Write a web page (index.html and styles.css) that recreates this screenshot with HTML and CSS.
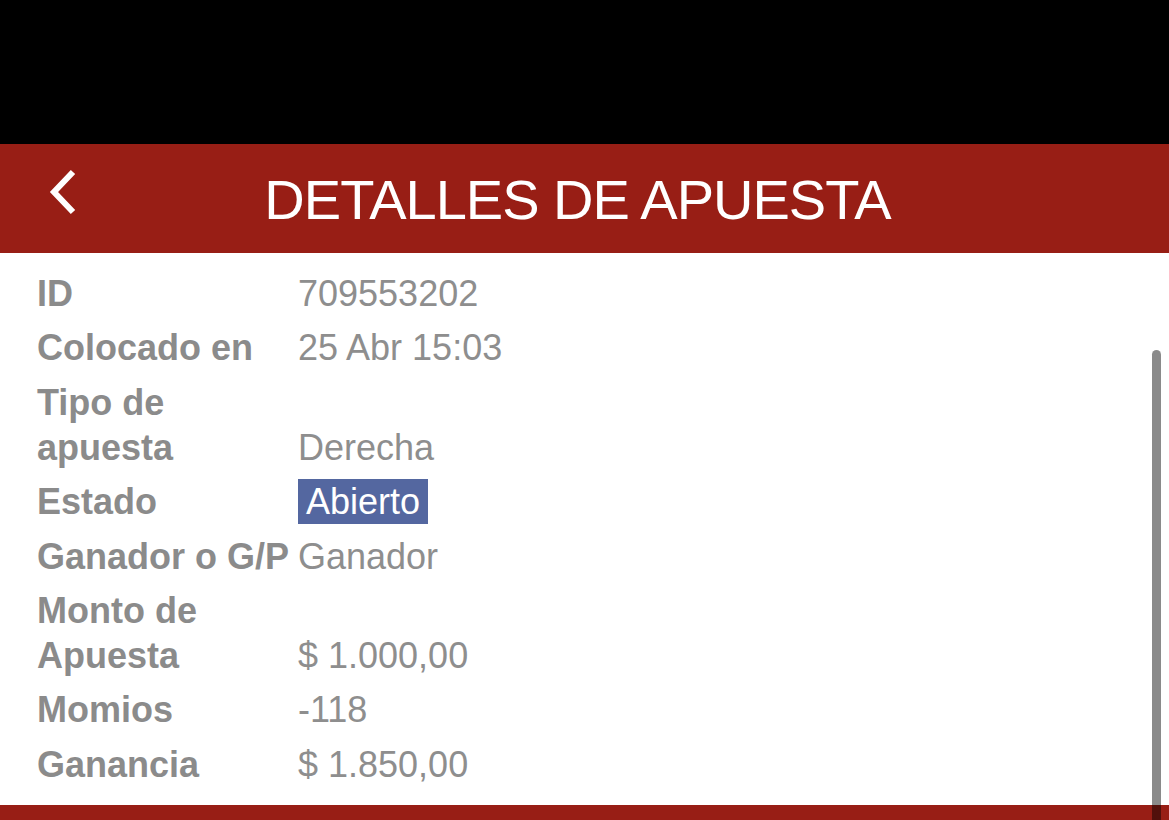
FILE: index.html
```html
<!DOCTYPE html>
<html lang="es">
<head>
<meta charset="utf-8">
<title>Detalles de apuesta</title>
<link rel="stylesheet" href="styles.css">
</head>
<body>
<div class="screen">
  <div class="statusbar"></div>
  <header class="topbar">
    <div class="back">
      <svg width="30" height="46" viewBox="0 0 30 46" aria-hidden="true">
        <polyline points="25,3 6,23 25,43" fill="none" stroke="#ffffff" stroke-width="6" stroke-linejoin="miter"/>
      </svg>
    </div>
    <h1 class="title">DETALLES DE APUESTA</h1>
    <div class="spacer"></div>
  </header>
  <main class="content">
    <div class="details">
      <div class="label">ID</div><div class="value">709553202</div>
      <div class="label">Colocado en</div><div class="value">25 Abr 15:03</div>
      <div class="label">Tipo de apuesta</div><div class="value">Derecha</div>
      <div class="label">Estado</div><div class="value"><span class="badge">Abierto</span></div>
      <div class="label">Ganador o G/P</div><div class="value">Ganador</div>
      <div class="label">Monto de Apuesta</div><div class="value">$ 1.000,00</div>
      <div class="label">Momios</div><div class="value">-118</div>
      <div class="label">Ganancia</div><div class="value">$ 1.850,00</div>
    </div>
  </main>
  <footer class="bottombar"></footer>
  <div class="scrollbar"></div>
</div>
</body>
</html>
```
FILE: styles.css
```css
html, body {
  margin: 0;
  padding: 0;
  background: #ffffff;
}
.screen {
  position: relative;
  width: 1169px;
  height: 820px;
  overflow: hidden;
  display: flex;
  flex-direction: column;
  font-family: "Liberation Sans", Arial, Helvetica, sans-serif;
}
.statusbar {
  height: 144px;
  background: #000000;
  flex: none;
}
.topbar {
  height: 109px;
  flex: none;
  background: #981e15;
  display: grid;
  grid-template-columns: 100px 1fr 100px;
  align-items: center;
}
.back {
  padding-left: 48px;
  padding-bottom: 14px;
  display: flex;
  align-items: center;
}
.back svg {
  display: block;
}
.title {
  margin: 0;
  padding-right: 14px;
  text-align: center;
  color: #ffffff;
  font-weight: normal;
  font-size: 56px;
  letter-spacing: -1px;
  line-height: 1;
  padding-top: 2px;
}
.content {
  flex: 1;
  padding: 18px 0 0 37px;
}
.details {
  display: grid;
  grid-template-columns: 256px 1fr;
  column-gap: 5px;
  row-gap: 9.4px;
  font-size: 36px;
  line-height: 45px;
}
.label {
  font-weight: bold;
  color: #8b8b8b;
}
.value {
  color: #8e8e8e;
  align-self: end;
}
.badge {
  display: inline-block;
  background: #5467a0;
  color: #ffffff;
  padding: 0 8px;
  line-height: 45px;
  vertical-align: top;
}
.bottombar {
  height: 15px;
  flex: none;
  background: #981e15;
}
.scrollbar {
  position: absolute;
  left: 1152px;
  top: 350px;
  width: 9px;
  height: 480px;
  border-radius: 5px 5px 0 0;
  background: rgba(0, 0, 0, 0.46);
}
```
